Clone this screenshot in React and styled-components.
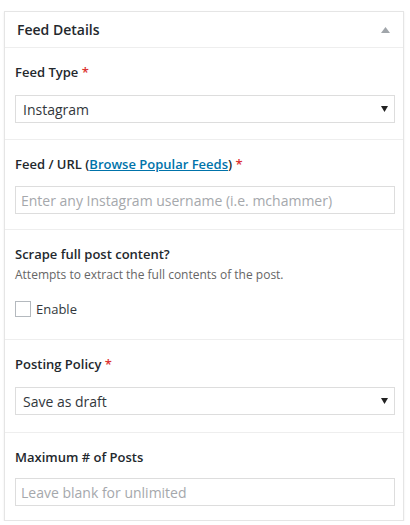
import React from 'react'
import styled, { createGlobalStyle } from 'styled-components'

const GlobalStyle = createGlobalStyle`
  body {
    margin: 0;
    background: #fff;
    font-family: "Open Sans", "Liberation Sans", sans-serif;
    color: #23282d;
  }
`

const Panel = styled.div`
  box-sizing: border-box;
  width: 400px;
  margin: 11px 0 0 4px;
  background: #fff;
  border: 1px solid #e5e5e5;
  box-shadow: 0 1px 2px rgba(0, 0, 0, 0.08);
`

const Header = styled.div`
  display: flex;
  align-items: center;
  justify-content: space-between;
  height: 35px;
  padding: 0 12px;
  border-bottom: 1px solid #eee;
  font-size: 14px;
  font-weight: 600;
`

const Toggle = styled.svg`
  width: 9px;
  height: 6px;
  margin-right: 1px;
  fill: #a0a5aa;
`

const Section = styled.div`
  padding: 14px 8px ${p => p.$bottom || 16}px 10px;
  border-bottom: ${p => (p.$last ? 'none' : '1px solid #eee')};
`

const Label = styled.div`
  font-size: 13px;
  font-weight: 600;
  line-height: 20px;
  margin-bottom: ${p => p.$gap || 12}px;
`

const Required = styled.span`
  color: #dc3232;
`

const Link = styled.a`
  color: #0073aa;
  text-decoration: underline;
`

const Hint = styled.div`
  font-size: 12px;
  line-height: 18px;
  color: #666;
  margin: -8px 0 16px;
`

const SelectBox = styled.div`
  box-sizing: border-box;
  display: flex;
  align-items: center;
  justify-content: space-between;
  width: 380px;
  height: 28px;
  padding: 0 6px 0 7px;
  border: 1px solid #ddd;
  font-size: 14px;
  color: #32373c;
`

const Arrow = styled.svg`
  width: 7px;
  height: 6px;
  fill: #222;
`

const TextInput = styled.input`
  box-sizing: border-box;
  display: block;
  width: 380px;
  height: 28px;
  margin: 0;
  padding: 0 5px;
  border: 1px solid #ddd;
  font-family: "Open Sans", "Liberation Sans", sans-serif;
  font-size: 14px;
  color: #32373c;
  outline: none;

  &::placeholder {
    color: #a5a8ac;
  }
`

const CheckRow = styled.label`
  display: flex;
  align-items: center;
  gap: 5px;
  font-size: 13px;
  line-height: 18px;
  color: #32373c;
`

const CheckBox = styled.span`
  box-sizing: border-box;
  width: 16px;
  height: 16px;
  border: 1px solid #b4b9be;
  background: #fff;
`

const Select = ({ value }) => (
  <SelectBox>
    <span>{value}</span>
    <Arrow viewBox="0 0 7 6"><path d="M0 0h7L3.5 6z" /></Arrow>
  </SelectBox>
)

export default function App () {
  return (
    <>
      <GlobalStyle />
      <Panel>
        <Header>
          <span>Feed Details</span>
          <Toggle viewBox="0 0 9 6"><path d="M0 6L4.5 0 9 6z" /></Toggle>
        </Header>

        <Section $bottom={16}>
          <Label $gap={13}>Feed Type <Required>*</Required></Label>
          <Select value="Instagram" />
        </Section>

        <Section $bottom={15}>
          <Label>Feed / URL (<Link href="#">Browse Popular Feeds</Link>) <Required>*</Required></Label>
          <TextInput placeholder="Enter any Instagram username (i.e. mchammer)" />
        </Section>

        <Section $bottom={21}>
          <Label $gap={10}>Scrape full post content?</Label>
          <Hint>Attempts to extract the full contents of the post.</Hint>
          <CheckRow>
            <CheckBox />
            Enable
          </CheckRow>
        </Section>

        <Section $bottom={17}>
          <Label $gap={13}>Posting Policy <Required>*</Required></Label>
          <Select value="Save as draft" />
        </Section>

        <Section $last $bottom={14}>
          <Label $gap={11}>Maximum # of Posts</Label>
          <TextInput placeholder="Leave blank for unlimited" />
        </Section>
      </Panel>
    </>
  )
}
